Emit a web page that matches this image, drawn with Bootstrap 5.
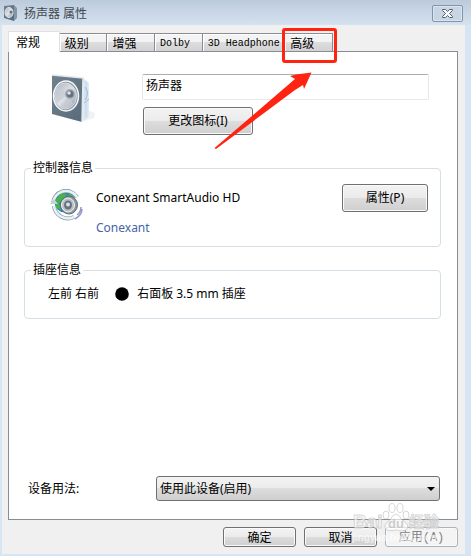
<!DOCTYPE html>
<html lang="zh-CN">
<head>
<meta charset="utf-8">
<meta name="viewport" content="width=device-width, initial-scale=1">
<title>扬声器 属性</title>
<link href="https://cdn.jsdelivr.net/npm/bootstrap@5.3.0/dist/css/bootstrap.min.css" rel="stylesheet">
<style>
body{font:12px/16px "Noto Sans","Noto Sans CJK SC",sans-serif;color:#000;background:#d7e4f2}
.dialog-win{min-height:100vh;padding:0 6px 3px 2px}
.title-bar{height:25px;margin:0 -6px 0 -2px;padding:0 8px 0 3px;background:linear-gradient(#bccbdb,#d5e2f0);color:#41464f}
.title-bar h1{font-size:12px;line-height:16px;font-weight:400;margin:2px 0 0 6px}
.close-btn{width:31px;height:17px;margin-top:2px;border:1px solid #8592ad;border-radius:2px;background:#c8d5e4;box-shadow:inset 0 0 0 1px #dbe5f0}
.client{background:#f0f0f0;padding:6px 7px 7px 6px}
.tab-strip{height:20px;padding-right:125px;margin-bottom:0;border:0;flex-wrap:nowrap}
.tab-strip .nav-link{position:relative;height:18px;width:48px;padding:0 0 0 5px;text-align:left;white-space:nowrap;color:#000;font:12px/18px "Noto Sans CJK SC",sans-serif;border:1px solid #898c95;border-left-width:0;border-bottom:0;border-radius:0;margin:0;background:linear-gradient(#f3f3f3 0 45%,#dddddd 50%,#d2d2d2);box-shadow:inset 1px 1px 0 #fff}
.tab-strip .nav-link.active{width:52px;height:21px;margin-bottom:-1px;padding-left:7px;line-height:18px;border-left-width:1px;background:#fff;z-index:1}
.tab-strip .nav-link.latin-tab{font:10px/20px "Liberation Mono",monospace}
.tab-strip .wide-tab{width:83px}
.red-frame::after{content:"";position:absolute;left:-3px;top:-6px;width:55px;height:35px;border:3px solid #ff2412;border-radius:3px;z-index:2}
.tab-page{border:1px solid #898c95;background:#fff;min-height:469px;padding:22px 16px 18px 15px}
.win-btn{font-size:12px;line-height:16px;color:#000;border:1px solid #707070;border-radius:3px;padding:0;background:linear-gradient(#f3f3f3,#ebebeb 48%,#dddddd 50%,#cfcfcf);box-shadow:inset 0 0 0 1px #fafafa}
.win-btn:disabled{color:#838383;background:#f4f4f4;border-color:#adb2b5;opacity:1}
.device-icon{width:46px;margin:0 46px 0 26px}
.name-box{font-size:12px;line-height:16px;color:#000;height:26px;padding:0 3px 4px;border:1px solid #e3e9ef;border-top-color:#abadb3;border-radius:2px}
.icon-btn{width:110px;height:28px;margin:7px 0 0 1px}
.group-box{border:1px solid #d5dfe5;border-radius:4px;padding:0 12px 0 23px;min-width:0}
.group-box legend{float:none;width:auto;font-size:12px;line-height:16px;margin:-1px 0 0 -17px;padding:0 2px;height:16px}
.ctrl-box{height:87px;margin-top:25px}
.jack-box{height:57px;margin-top:15px}
.jack-line{padding-top:8px}
.ctrl-icon{margin:13px 15px 0 2px}
.ctrl-text{padding-top:14px;margin-left:-2px}
.prop-btn{width:86px;height:28px;margin-top:8px}
.vendor{color:#4465a8;text-decoration:none;margin-top:14px}
.usage-row{padding-left:4px;padding-right:1px}
.usage-row label{width:128px}
.usage-row .form-select{font-size:12px;line-height:16px;height:25px;padding:0 20px 0 3px;color:#000;border:1px solid #707070;border-radius:3px;background:linear-gradient(#f3f3f3,#ebebeb 48%,#dddddd 50%,#cfcfcf)}
.drop-mark{position:absolute;right:5px;top:11px;border:4px solid transparent;border-top-color:#000;border-bottom:0;pointer-events:none}
.foot-row{padding-top:7px;gap:8px}
.foot-row .win-btn{width:73px;height:20px;line-height:16px;font-family:"Noto Sans CJK SC",sans-serif}
.foot-row .latin-mono{font-family:"Liberation Mono",monospace;font-size:12px}
.pointer-arrow{position:absolute;left:212px;top:70px;z-index:3;pointer-events:none}
.site-mark{position:absolute;right:27px;bottom:8px;z-index:3;pointer-events:none}
.site-mark text{font-family:"Liberation Sans","Noto Sans CJK SC",sans-serif;font-weight:700}
</style>
<script src="https://cdn.jsdelivr.net/npm/bootstrap@5.3.0/dist/js/bootstrap.bundle.min.js"></script>
</head>
<body>
<svg class="position-absolute" width="0" height="0" aria-hidden="true">
  <defs>
    <linearGradient id="face" x1="0" y1="0" x2="1" y2="1"><stop stop-color="#71808d"/><stop offset="1" stop-color="#586b7b"/></linearGradient>
    <linearGradient id="cone" x1="0" y1="0" x2="1" y2="1"><stop stop-color="#aab2bc"/><stop offset=".5" stop-color="#dfe2e8"/><stop offset="1" stop-color="#8f98a4"/></linearGradient>
    <linearGradient id="side"><stop stop-color="#e9f3fb"/><stop offset=".6" stop-color="#cbdcec"/><stop offset="1" stop-color="#e4edf6"/></linearGradient>
  </defs>
</svg>
<main class="dialog-win position-relative">
  <header class="title-bar d-flex align-items-center">
    <svg width="15" height="18" viewBox="0 0 15 18" aria-hidden="true"><path d="M1 2l10-1v16L1 14z" fill="url(#face)"/><path d="M11 1l3 3v10l-3 3z" fill="#8296a8"/><ellipse cx="6" cy="8.500" rx="4" ry="5" fill="url(#cone)" stroke="#e1e6ec"/><circle cx="8" cy="8" r="1.500" fill="#68717d"/></svg>
    <h1>扬声器 属性</h1>
    <button type="button" class="close-btn ms-auto p-0 d-flex align-items-center justify-content-center" aria-label="关闭"><svg width="13" height="11" viewBox="0 0 13 11"><path d="M1.500 1.500h3l2 2 2-2h3v1l-3 3 3 3v1h-3l-2-2-2 2h-3v-1l3-3-3-3z" fill="#f7f9fb" stroke="#59606d"/></svg></button>
  </header>
  <div class="client">
    <div class="nav nav-tabs tab-strip align-items-end" role="tablist">
      <button type="button" class="nav-link active" role="tab" aria-selected="true">常规</button>
      <button type="button" class="nav-link" role="tab">级别</button>
      <button type="button" class="nav-link" role="tab">增强</button>
      <button type="button" class="nav-link latin-tab" role="tab">Dolby</button>
      <button type="button" class="nav-link latin-tab wide-tab" role="tab">3D Headphone</button>
      <button type="button" class="nav-link red-frame" role="tab">高级</button>
    </div>
    <section class="tab-page d-flex flex-column">
      <div class="d-flex">
        <svg class="device-icon flex-shrink-0" height="50" viewBox="0 0 46 50" aria-hidden="true">
          <path d="M34 47l10-3 1-5-8-3z" fill="#f0f1f3"/>
          <path d="M33 4l6 5v33l-7 6z" fill="url(#side)"/><path d="M35 13q5 6 0 13M34 29l5-4" stroke="#9ebbd7" fill="none"/>
          <path d="M2 1l31 3-1 44L2 40z" fill="url(#face)"/><path d="M2 1l31 3-1 44" fill="none" stroke="#e2e8eb" stroke-width="1.500"/>
          <ellipse cx="16" cy="22" rx="12.500" ry="15" fill="#8d98a5" stroke="#f4f7f9" stroke-width="1.500"/>
          <ellipse cx="15.500" cy="22" rx="11" ry="13" fill="url(#cone)" stroke="#d4dae1"/>
          <path d="M19 20L7 14q-4 8 0 15zM19 22l-9 11q7 4 13-3z" fill="#c7cbd3" opacity=".7"/>
          <circle cx="20" cy="20" r="5" fill="#a3abb5"/><circle cx="20" cy="20" r="3.500" fill="#66717e"/><circle cx="19" cy="19" r="1.800" fill="#dce2e8"/>
        </svg>
        <div class="flex-grow-1 pe-2 me-1">
          <input type="text" class="form-control name-box" value="扬声器" aria-label="设备名称">
          <button type="button" class="btn win-btn icon-btn">更改图标(I)</button>
        </div>
      </div>
      <fieldset class="group-box ctrl-box">
        <legend>控制器信息</legend>
        <div class="d-flex">
          <svg class="ctrl-icon flex-shrink-0" width="33" height="32" viewBox="0 0 33 32" aria-hidden="true">
            <path d="M27 26q4-3 4-8M25 30q7-4 7-10" fill="none" stroke="#9296ca" stroke-width="1.500"/>
            <circle cx="15" cy="13" r="10.500" fill="#2f7fc6"/><path d="M6 11l5-7 6 1-2 5-6 4 2 7-5-2zM20 4l4 4-3 2-4-3z" fill="#43b649"/>
            <path d="M3 15A13 13 0 0 1 27 8M4 17a14 14 0 0 0 20 11" fill="none" stroke="#8399a5" stroke-width="4"/>
            <path d="M3 15A13 13 0 0 1 27 8M4 17a14 14 0 0 0 20 11" fill="none" stroke="#e8f1f5" stroke-width="2.500"/><path d="M0 15h8l-4-5z" fill="#c6d4da"/>
            <ellipse cx="19" cy="16" rx="8.500" ry="9" fill="#8c969f" stroke="#616c76"/><ellipse cx="18" cy="16" rx="6.500" ry="7" fill="#b9c1c8" stroke="#f0f3f5"/><ellipse cx="18" cy="16" rx="4" ry="4.500" fill="#68727d"/><circle cx="18" cy="15.500" r="2" fill="#d9e0e4"/>
          </svg>
          <div class="ctrl-text d-flex flex-column align-items-start flex-grow-1"><span>Conexant SmartAudio HD</span><a href="#" class="vendor">Conexant</a></div>
          <button type="button" class="btn win-btn prop-btn">属性(P)</button>
        </div>
      </fieldset>
      <fieldset class="group-box jack-box">
        <legend>插座信息</legend>
        <div class="jack-line d-flex align-items-center">
          <span>左前 右前</span>
          <svg class="ms-3 me-2" width="14" height="14" viewBox="0 0 14 14" aria-hidden="true"><circle cx="7" cy="7" r="6.800"/></svg>
          <span>右面板 3.5 mm 插座</span>
        </div>
      </fieldset>
      <div class="usage-row d-flex align-items-center mt-auto">
        <label for="usage">设备用法:</label>
        <div class="position-relative flex-grow-1"><select id="usage" class="form-select"><option>使用此设备(启用)</option></select><span class="drop-mark"></span></div>
      </div>
    </section>
    <footer class="foot-row d-flex justify-content-end">
      <button type="button" class="btn win-btn">确定</button>
      <button type="button" class="btn win-btn">取消</button>
      <button type="button" class="btn win-btn" disabled>应用<span class="latin-mono">(A)</span></button>
    </footer>
  </div>
  <svg class="pointer-arrow" width="102" height="82" viewBox="0 0 102 82" aria-hidden="true"><path d="M2.500 78L83 9 78 6 84 4.500 99.500 2.500 92 19 91 15 83 20 4 79z" fill="#ff2412"/></svg>
  <svg class="site-mark" width="92" height="48" viewBox="0 0 92 48">
    <g fill="#fff" fill-opacity=".65" stroke="#b0b0b0" stroke-opacity=".5" stroke-width="1">
      <ellipse cx="34" cy="14" rx="3" ry="4"/><ellipse cx="40" cy="7" rx="3" ry="4.500"/><ellipse cx="48" cy="7" rx="3" ry="4.500"/><ellipse cx="54" cy="14" rx="3" ry="4"/>
      <path d="M44 13q3 0 6 6 8 5 5 9-3 3-11 1-9 2-11-2-1-4 5-8 3-6 6-6z"/>
      <text x="1" y="27" font-size="19">Bai</text><text x="57" y="26" font-size="15">经验</text>
      <text x="0" y="40" font-size="10" stroke="none">jingyan.baidu.com</text>
    </g>
    <text x="36" y="27" font-size="13" fill="#b8b8b8" fill-opacity=".7">du</text>
  </svg>
</main>
</body>
</html>
